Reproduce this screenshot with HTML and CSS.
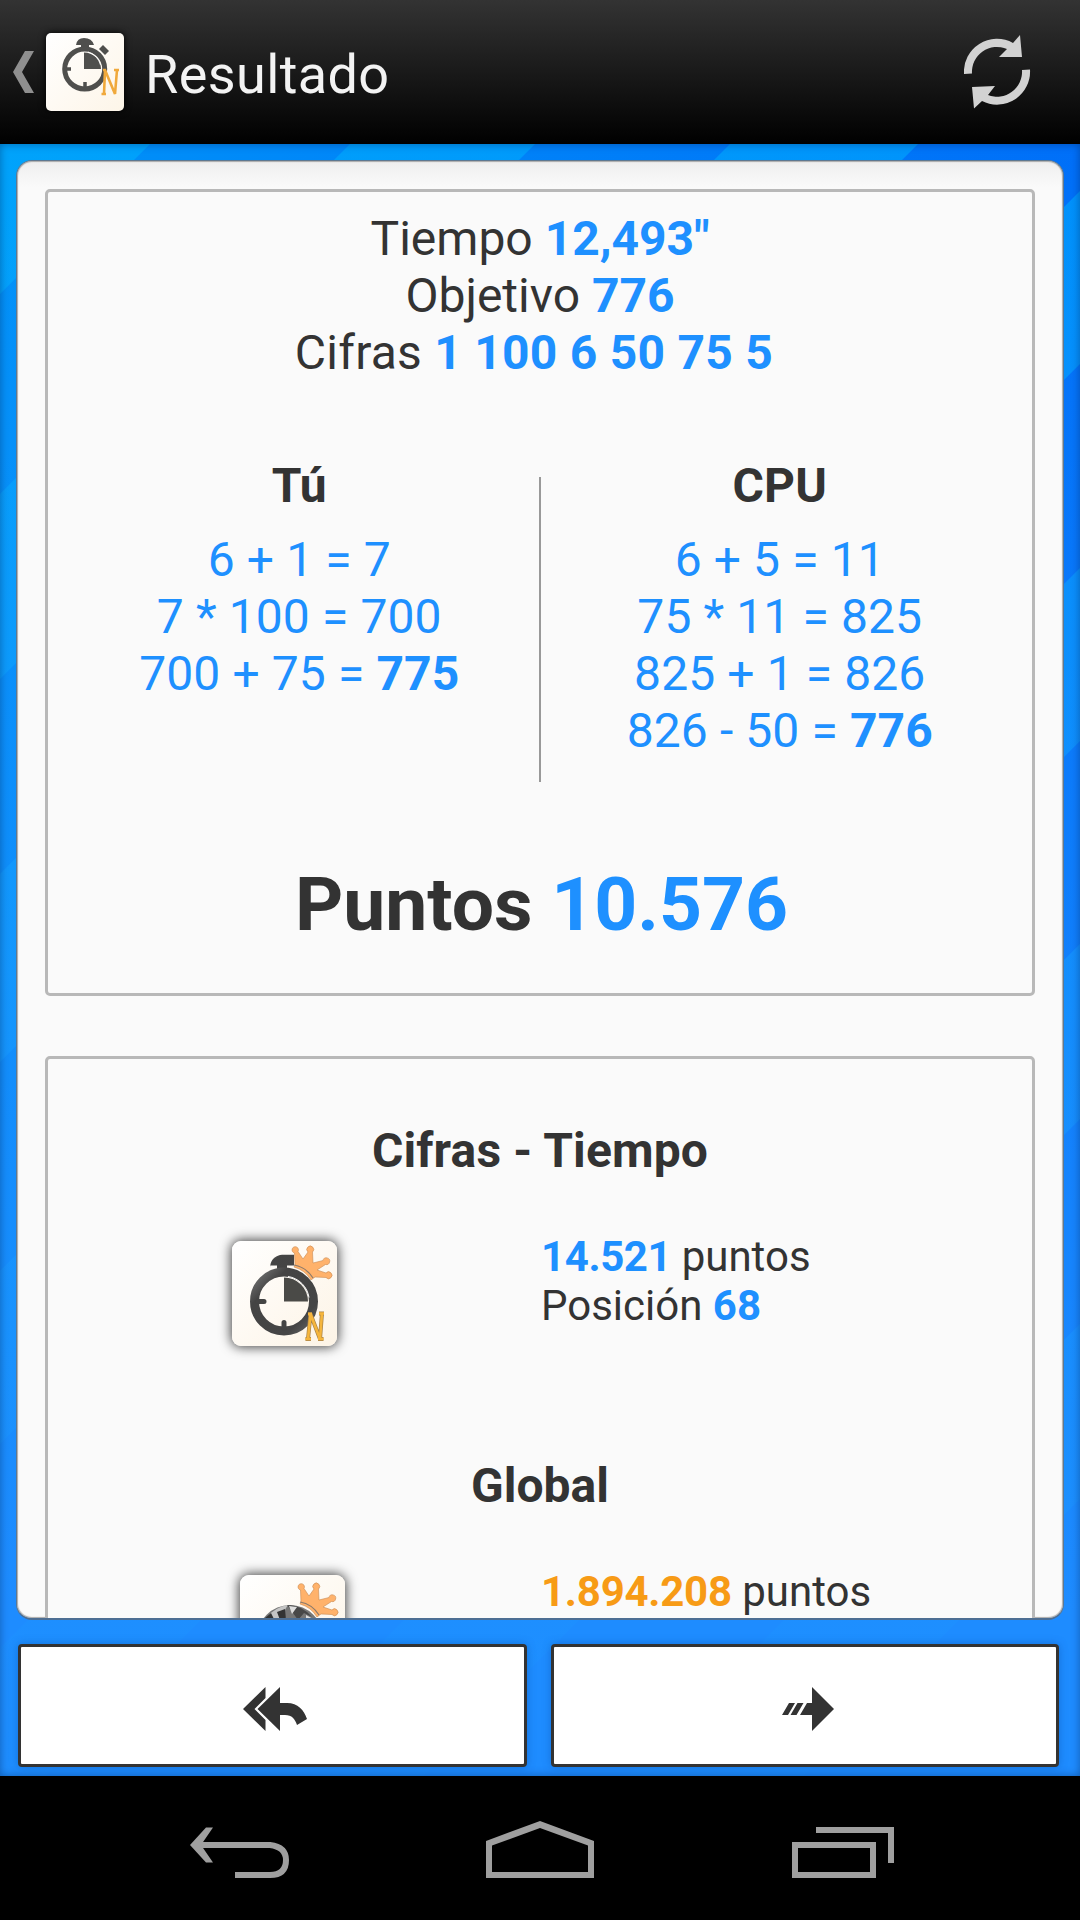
FILE: index.html
```html
<!DOCTYPE html>
<html lang="es">
<head>
<meta charset="utf-8">
<title>Resultado</title>
<link rel="stylesheet" href="styles.css">
</head>
<body>
<svg class="defs" width="0" height="0" aria-hidden="true">
  <defs>
    <linearGradient id="ink" x1="0" y1="0" x2="1" y2="1">
      <stop offset="0" stop-color="#777"/>
      <stop offset=".25" stop-color="#444"/>
      <stop offset=".8" stop-color="#454545"/>
      <stop offset="1" stop-color="#666"/>
    </linearGradient>
    <symbol id="watch" viewBox="0 0 68 82">
      <path d="M20 14Q20 2 32 0H44V11H37V16H27V11H20Z" fill="url(#ink)"/>
      <circle cx="34" cy="47" r="29.5" fill="none" stroke="url(#ink)" stroke-width="9"/>
      <path d="M34 23A24 24 0 0 1 58 47H34Z" fill="#4a4a47"/>
      <path d="M38 22A25 25 0 0 1 59 43" fill="none" stroke="#fff" stroke-width="1"/>
      <path d="M8 47H14M34 74V68" stroke="#444" stroke-width="5" stroke-linecap="round"/>
    </symbol>
    <symbol id="crown" viewBox="0 0 44 36">
      <path d="M6 21L5.500 9A3.200 3.200 0 1 1 9 7.500L14 15L19 8A3.400 3.400 0 1 1 23.500 8L24 19L34 16.500A3.400 3.400 0 1 1 36.500 20.500L28 26L37 29A3.400 3.400 0 1 1 37 33.500L26 33L22 36Q16 26 5 23Z" fill="#ffb26b" stroke="#c88a52" stroke-width=".6"/>
      <path d="M5 21Q17 23 24 34" fill="none" stroke="#8b7a6b" stroke-width="1.2"/>
    </symbol>
  </defs>
</svg>

<header class="bar">
  <svg class="up" width="21" height="43" viewBox="0 0 21 43"><path d="M12 0H21L9 21L21 42H12L0 21Z" fill="#8f8f8f"/></svg>
  <div class="app-icon">
    <svg width="78" height="78" viewBox="0 0 78 78">
      <path d="M30 12Q31 5 38 5Q46 5 48 12H43V17H35V12Z" fill="#4f4f4d"/>
      <circle cx="38.700" cy="36" r="20" fill="none" stroke="#4f4f4d" stroke-width="5"/>
      <path d="M38 19.500A17 17 0 0 1 55 36H38Z" fill="#4f4f4d"/>
      <path d="M42 19Q52 22 54.500 32" fill="none" stroke="#fff" stroke-width=".8"/>
      <path d="M20 36H25M39 54V49" stroke="#4f4f4d" stroke-width="3.500"/>
      <path d="M57 12L63 18L59 22L53 16Z" fill="#4f4f4d"/>
      <path d="M58 61L59 37L69 61L71 37M55.500 61H60M68 37H73M57 37H60" fill="none" stroke="#f0a93c" stroke-width="2.600"/>
    </svg>
  </div>
  <h1 class="title">Resultado</h1>
  <svg class="refresh" width="68" height="75" viewBox="0 0 68 75" fill="#d2d2d2">
    <path d="M0 39A33 33 0 0 1 49 8L56 0L58 22H35L43 14A25 25 0 0 0 8 38.500Z"/>
    <path d="M66 34.500A33 33 0 0 1 18 66L10 73.500L8 52L31 51L24 60A25 25 0 0 0 58 35Z"/>
  </svg>
</header>

<main class="stage">
  <svg class="backdrop" width="1080" height="1632" viewBox="0 0 1080 1632">
    <defs>
      <linearGradient id="stripe" gradientUnits="userSpaceOnUse" x1="0" y1="0" x2="0" y2="1632">
        <stop offset="0" stop-color="#00b4ff" stop-opacity=".5"/>
        <stop offset=".5" stop-color="#18a0ff" stop-opacity=".45"/>
        <stop offset="1" stop-color="#1e90ff" stop-opacity=".4"/>
      </linearGradient>
    </defs>
    <g fill="url(#stripe)">
      <path d="M0 0H150L0 150Z"/>
      <path d="M350 0H535L0 535V350Z"/>
      <path d="M730 0H918L0 918V730Z"/>
      <path d="M1080 47V220L0 1300V1127Z"/>
      <path d="M1080 424V597L45 1632H0V1504Z"/>
      <path d="M1080 800V975L423 1632H248Z"/>
      <path d="M1080 1180V1355L803 1632H628Z"/>
    </g>
  </svg>
  <section class="sheet">
    <article class="box result">
      <p>Tiempo <b>12,493"</b></p>
      <p>Objetivo <b>776</b></p>
      <p class="numbers">Cifras <b>1 100 6 50 75 5&nbsp;</b></p>
      <div class="players">
        <div class="player">
          <h2>Tú</h2>
          <p>6 + 1 = 7</p>
          <p>7 * 100 = 700</p>
          <p>700 + 75 = <b>775</b></p>
        </div>
        <div class="rule"></div>
        <div class="player">
          <h2>CPU</h2>
          <p>6 + 5 = 11</p>
          <p>75 * 11 = 825</p>
          <p>825 + 1 = 826</p>
          <p>826 - 50 = <b>776</b></p>
        </div>
      </div>
      <p class="score">Puntos <b>10.576</b></p>
    </article>
    <article class="box ranking">
      <h2 class="mode">Cifras - Tiempo</h2>
      <div class="rank">
        <div class="badge-cell">
          <div class="badge">
            <svg width="105" height="105" viewBox="0 0 105 105">
              <use href="#watch" x="18" y="13.500" width="68" height="82"/>
              <use href="#crown" x="57" y="3" width="44" height="36"/>
              <path d="M76 98L78.500 73L88 98L90 72M73.500 98H79M86 98H91.500M76 73H80M87 72.500H92" fill="none" stroke="#a8834a" stroke-width="4"/>
              <path d="M76 98L78.500 73L88 98L90 72M73.500 98H79M86 98H91.500M76 73H80M87 72.500H92" fill="none" stroke="#f5b53c" stroke-width="2.600"/>
            </svg>
          </div>
        </div>
        <div class="rank-text">
          <p><b>14.521</b> puntos</p>
          <p>Posición <b class="place">68</b></p>
        </div>
      </div>
      <h2 class="global">Global</h2>
      <div class="rank">
        <div class="badge-cell shifted">
          <div class="badge">
            <svg width="105" height="105" viewBox="0 0 105 105">
              <circle cx="50" cy="63" r="33" fill="#777"/>
              <path d="M26 43Q35 32 48 30Q42 37 46 44H36Z" fill="#c4c4c4"/>
              <path d="M37 37L45 34L46 45H40ZM25 43L31 38L34 44Z" fill="#333"/>
              <path d="M47 30Q62 30 72 42L64 38L58 45L53 38Z" fill="#484848"/>
              <path d="M49 31L57 32L52 39ZM66 40L75 45H66Z" fill="#dedede"/>
              <use href="#crown" x="55" y="6" width="44" height="36"/>
            </svg>
          </div>
        </div>
        <div class="rank-text">
          <p><b class="gold">1.894.208</b> puntos</p>
        </div>
      </div>
    </article>
  </section>
  <div class="actions">
    <button class="action" aria-label="Volver">
      <svg width="64" height="44" viewBox="0 0 64 44" fill="#333">
        <path d="M22.500 0V11L11.500 22L22.500 33V44L0 22Z"/>
        <path d="M37 0V16H44C55 16 61 23 64 32L54 38C52 32 49 28 42 28H37V44L14.500 22Z"/>
      </svg>
    </button>
    <button class="action" aria-label="Siguiente">
      <svg width="52" height="44" viewBox="0 0 52 44" fill="#333">
        <path d="M30 0L52 22L30 44V28H18L25 16H30Z"/>
        <path d="M7 16H13L6 28H0ZM15.500 16H21.500L14.500 28H8.500Z"/>
      </svg>
    </button>
  </div>
</main>

<nav class="system">
  <svg width="99" height="51" viewBox="0 0 99 51" fill="none" stroke="#9f9f9f" stroke-width="6">
    <path d="M8 18H80Q96 20 96 33Q96 48 80 48H45"/>
    <path d="M16 0H23L11 17.500L23 35H16L0 17.500Z" fill="#9f9f9f" stroke="none" transform="translate(0 .5)"/>
  </svg>
  <svg class="home" width="108" height="57" viewBox="0 0 108 57"><path fill="#9f9f9f" fill-rule="evenodd" d="M54 0L108 20V57H0V20ZM54 7L6 24.500V51H102V24.500Z"/></svg>
  <svg width="102" height="51" viewBox="0 0 102 51" fill="#9f9f9f">
    <path d="M24 0H102V36H96V6H24Z"/>
    <path fill-rule="evenodd" d="M0 15H84V51H0ZM6 21V45H78V21Z"/>
  </svg>
</nav>
</body>
</html>
```

FILE: styles.css
```css
* { box-sizing: border-box; }

body {
  margin: 0;
  width: 1080px;
  height: 1920px;
  display: flex;
  flex-direction: column;
  overflow: hidden;
  background: #000;
  color: #333;
  font-family: Roboto, "Noto Sans", sans-serif;
  font-size: 48px;
  line-height: 57px;
}

h1, h2, p { margin: 0; }
svg { display: block; }
.defs { position: absolute; }
b { color: #1e90ff; font-weight: 700; }

.bar {
  height: 144px;
  flex: none;
  display: flex;
  align-items: center;
  padding: 0 48px 0 13px;
  background: linear-gradient(#333, #000);
}
.app-icon {
  width: 78px;
  height: 78px;
  margin: 0 0 0 12px;
  border-radius: 5px;
  background: linear-gradient(135deg, #fff, #fdf5e8);
  box-shadow: 0 0 7px #000;
}
.title {
  flex: 1;
  margin-left: 21px;
  color: #f3f3f3;
  font-size: 54px;
  font-weight: 400;
  letter-spacing: .4px;
  line-height: 64px;
  padding-top: 5px;
}
.refresh { flex: none; }

.stage {
  height: 1632px;
  flex: none;
  display: flex;
  flex-direction: column;
  padding: 16px 16px 0;
  position: relative;
  background: linear-gradient(#1e88ff00, #1e8cff 90%), linear-gradient(90deg, #0092f8, #006ff8);
}
.stage::after {
  content: "";
  position: absolute;
  inset: 0;
  pointer-events: none;
  box-shadow: inset 0 0 9px rgba(0, 30, 80, .45);
}
.backdrop { position: absolute; inset: 0; }

.sheet {
  position: relative;
  height: 1460px;
  flex: none;
  overflow: hidden;
  padding: 28px 28px 0;
  border: 1px solid #5d7891;
  border-bottom: 2px solid #4d6e93;
  border-radius: 16px;
  background: linear-gradient(#eee, #fafafa 26px);
  box-shadow: inset 0 0 1px 1px #aaa;
}
.box {
  border: 3px solid #b8b8b8;
  border-radius: 5px;
  background: #fafafa;
  text-align: center;
}
.result { height: 807px; padding: 18px 12px 0; }
.numbers { letter-spacing: .25px; }
.players { display: flex; margin: 76px 1px 0 0; height: 325px; }
.player { flex: 1; color: #1e90ff; letter-spacing: .1px; }
h2 { font-size: 48px; font-weight: 700; line-height: 57px; color: #333; }
.player h2 { margin-bottom: 17px; }
.rule { width: 2px; height: 305px; margin-top: 20px; background: #999; }
.score { margin-top: 78px; padding-left: 3px; font-size: 75px; line-height: 88px; font-weight: 700; }

.ranking { height: 700px; margin-top: 60px; padding-top: 63px; }
.mode { letter-spacing: .15px; }
.rank {
  display: grid;
  grid-template-columns: 493px 1fr;
  margin-top: 52px;
  height: 140px;
  font-size: 42px;
  line-height: 49px;
  text-align: left;
}
.rank-text { padding-top: 1px; }
.rank-text b { letter-spacing: -.4px; }
.rank-text .place { letter-spacing: 0; }
.rank-text .gold { color: #f79b16; letter-spacing: -.25px; }
.badge-cell { padding: 10px 0 0 184px; }
.badge-cell.shifted { padding: 10px 0 0 192px; }
.badge {
  width: 105px;
  height: 105px;
  border-radius: 9px;
  background: linear-gradient(135deg, #fff, #fdf4e6);
  box-shadow: 0 0 12px 1px rgba(0, 0, 0, .75);
}
.global { margin-top: 86px; }
.global + .rank { margin-top: 51px; }
.global + .rank .rank-text { padding-top: 2px; }

.actions {
  position: relative;
  display: flex;
  gap: 24px;
  margin: 24px 5px 0 2px;
}
.action {
  flex: 1;
  height: 123px;
  display: flex;
  align-items: center;
  justify-content: center;
  padding: 7px 0 0 6px;
  border: 3px solid #333;
  border-radius: 4px;
  background: #fff;
  box-shadow: 0 0 8px rgba(0, 60, 140, .35);
}

.system {
  height: 144px;
  flex: none;
  display: flex;
  justify-content: space-between;
  align-items: flex-end;
  padding: 0 186px 42px 190px;
  background: #000;
}
.home { margin-right: 2px; }
```
